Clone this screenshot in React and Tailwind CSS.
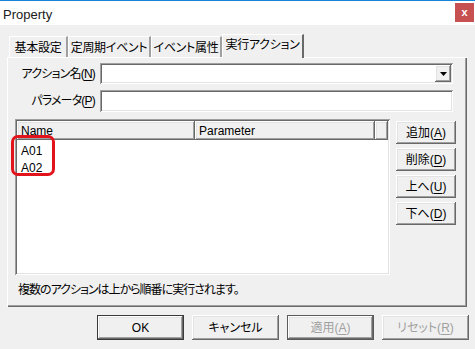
const raised =
  'bg-[#f0f0f0] shadow-[inset_-1px_-1px_0_#696969,inset_1px_1px_0_#ffffff,inset_-2px_-2px_0_#a0a0a0,inset_2px_2px_0_#e3e3e3]';
const sunken =
  'bg-white shadow-[inset_1px_1px_0_#a0a0a0,inset_-1px_-1px_0_#ffffff,inset_2px_2px_0_#696969,inset_-2px_-2px_0_#e3e3e3]';

function Key({ children }) {
  return <span className="underline underline-offset-[2px]">{children}</span>;
}

function Tab({ label, width, active }) {
  if (active) {
    return (
      <div
        className={`h-[24px] ${width} -mb-px relative z-10 bg-[#f0f0f0] border-t border-l border-white border-r-2 border-r-[#696969] flex items-center justify-center pb-[3px] whitespace-nowrap`}
      >
        {label}
      </div>
    );
  }
  return (
    <div
      className={`h-[21px] ${width} bg-[#f0f0f0] border-t border-l border-white border-r-2 border-r-[#a0a0a0] flex items-center justify-center pt-px whitespace-nowrap`}
    >
      {label}
    </div>
  );
}

function SideButton({ children }) {
  return (
    <div className={`${raised} w-[60px] h-[23px] flex items-center justify-center whitespace-nowrap`}>
      {children}
    </div>
  );
}

export default function App() {
  return (
    <div className="w-[475px] h-[349px] bg-[#f0f0f0] overflow-hidden text-[12px] leading-none text-black font-['Liberation_Sans','Noto_Sans_CJK_JP',sans-serif] [font-feature-settings:'palt']">
      {/* title bar */}
      <div className="h-px bg-[#1883d7]" />
      <div className="h-[24px] bg-white flex items-start justify-between pl-[3px] pr-px">
        <span className="mt-[7px] text-[13px] text-[#202020]">Property</span>
        <div className="mt-[2px] w-[19px] h-[19px] bg-[#c75050] text-white font-bold text-[11px] flex items-center justify-center pb-px">
          x
        </div>
      </div>

      {/* tabs */}
      <div className="mt-[8px] h-[24px] flex items-end pl-[9px] tracking-[-0.3px]">
        <Tab label="基本設定" width="w-[59px]" />
        <Tab label="定周期イベント" width="w-[83px]" />
        <Tab label="イベント属性" width="w-[71px]" />
        <Tab label="実行アクション" width="w-[82px]" active />
      </div>

      {/* panel */}
      <div className="ml-[7px] w-[460px] h-[250px] border-t border-l border-white shadow-[inset_-1px_-1px_0_#696969,inset_-2px_-2px_0_#a0a0a0] pt-[5px] pl-[7px]">
        <div className="flex items-center h-[21px]">
          <div className="w-[80px] flex justify-end whitespace-nowrap tracking-[-0.8px]">
            <span>
              アクション名(<Key>N</Key>)
            </span>
          </div>
          <div className={`${sunken} ml-[5px] w-[353px] h-[21px] flex justify-end items-start pt-[2px] pr-[2px]`}>
            <div className={`${raised} w-[16px] h-[17px] flex items-center justify-center`}>
              <svg width="7" height="4" viewBox="0 0 7 4">
                <path d="M0 0h7L3.5 4z" fill="#000" />
              </svg>
            </div>
          </div>
        </div>

        <div className="flex items-center h-[21px] mt-[6px]">
          <div className="w-[80px] flex justify-end whitespace-nowrap tracking-[-0.8px]">
            <span>
              パラメータ(<Key>P</Key>)
            </span>
          </div>
          <div className={`${sunken} ml-[5px] w-[353px] h-[22px]`} />
        </div>

        <div className="flex items-start mt-[8px]">
          <div className={`${sunken} relative w-[375px] h-[156px] p-[2px]`}>
            <div className="flex h-[19px]">
              <div className={`${raised} w-[178px] flex items-center pl-[4px]`}>Name</div>
              <div className={`${raised} w-[180px] flex items-center pl-[4px]`}>Parameter</div>
              <div className={`${raised} flex-1`} />
            </div>
            <div className="pl-[4px] pt-[2px]">
              <div className="h-[17px] flex items-center">A01</div>
              <div className="h-[17px] flex items-center">A02</div>
            </div>
            <div className="absolute left-[-4px] top-[16px] w-[44px] h-[41px] border-[3px] border-[#e3131b] rounded-[7px]" />
          </div>

          <div className="ml-[6px] mt-[2px] flex flex-col gap-[4px]">
            <SideButton>追加(<Key>A</Key>)</SideButton>
            <SideButton>削除(<Key>D</Key>)</SideButton>
            <SideButton>上へ(<Key>U</Key>)</SideButton>
            <SideButton>下へ(<Key>D</Key>)</SideButton>
          </div>
        </div>

        <div className="mt-[9px] pl-[3px] tracking-[-1px] whitespace-nowrap">
          複数のアクションは上から順番に実行されます。
        </div>
      </div>

      {/* dialog buttons */}
      <div className="mt-[8px] pl-[97px] flex gap-[8px]">
        <div className="w-[87px] h-[25px] border border-[#3a3a3a]">
          <div className={`${raised} w-full h-full flex items-center justify-center`}>OK</div>
        </div>
        <div className={`${raised} w-[87px] h-[25px] flex items-center justify-center`}>キャンセル</div>
        <div className="w-[87px] h-[25px] border border-[#5a5a5a]">
          <div className={`${raised} w-full h-full flex items-center justify-center text-[#a0a0a0] whitespace-nowrap`}>
            適用(<Key>A</Key>)
          </div>
        </div>
        <div className={`${raised} w-[87px] h-[25px] flex items-center justify-center text-[#a0a0a0] whitespace-nowrap`}>
          リセット(<Key>R</Key>)
        </div>
      </div>
    </div>
  );
}
